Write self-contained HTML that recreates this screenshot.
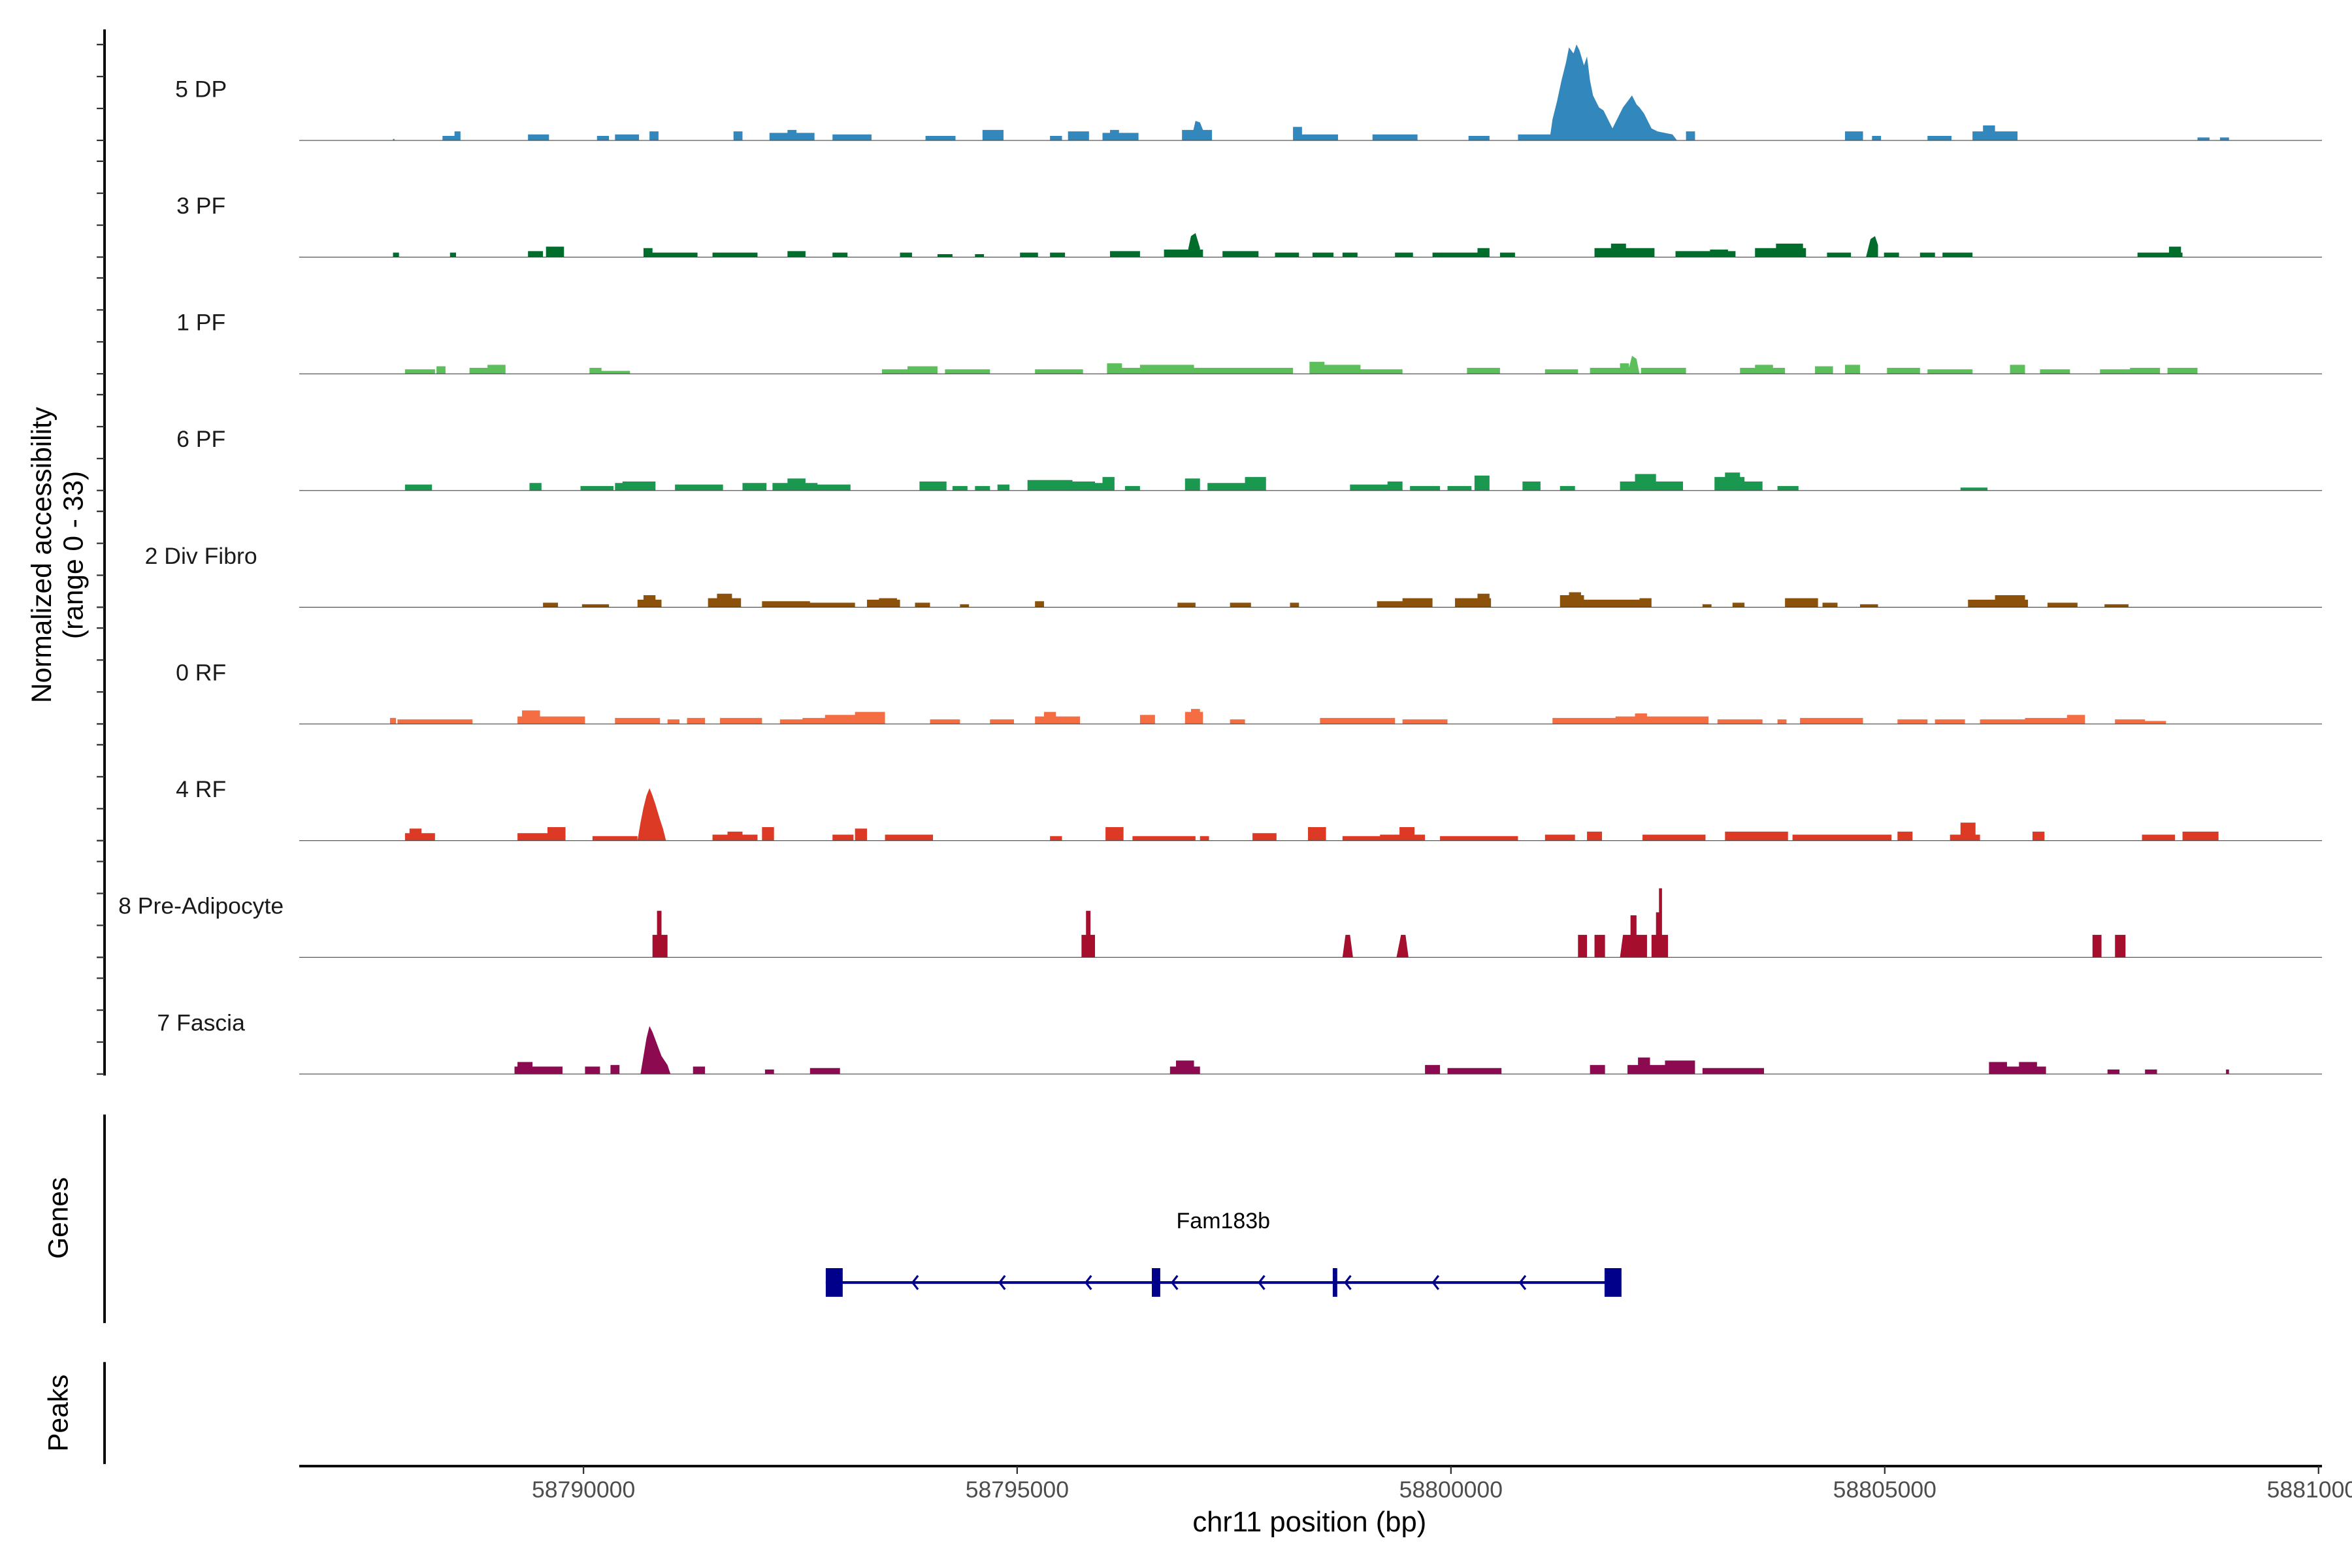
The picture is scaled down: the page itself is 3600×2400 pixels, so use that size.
<!DOCTYPE html>
<html><head><meta charset="utf-8"><style>
html,body{margin:0;padding:0;background:#fff;}
svg{display:block;}
text{font-family:"Liberation Sans",Arial,sans-serif;}
</style></head><body>
<svg width="3600" height="2400" viewBox="0 0 1568 1045.3" preserveAspectRatio="none" xmlns="http://www.w3.org/2000/svg">
<rect width="1568" height="1046" fill="#fff"/>
<line x1="69.7" y1="19.6" x2="69.7" y2="717" stroke="#000" stroke-width="1.7"/>
<g stroke="#333" stroke-width="1">
<path d="M64.5 93.6h5.2M64.5 72.3h5.2M64.5 51h5.2M64.5 29.7h5.2
M64.5 171.4h5.2M64.5 150.1h5.2M64.5 128.8h5.2M64.5 107.5h5.2
M64.5 249.2h5.2M64.5 227.9h5.2M64.5 206.6h5.2M64.5 185.3h5.2
M64.5 327h5.2M64.5 305.7h5.2M64.5 284.4h5.2M64.5 263.1h5.2
M64.5 404.8h5.2M64.5 383.5h5.2M64.5 362.2h5.2M64.5 340.9h5.2
M64.5 482.6h5.2M64.5 461.3h5.2M64.5 440h5.2M64.5 418.7h5.2
M64.5 560.4h5.2M64.5 539.1h5.2M64.5 517.8h5.2M64.5 496.5h5.2
M64.5 638.2h5.2M64.5 616.9h5.2M64.5 595.6h5.2M64.5 574.3h5.2
M64.5 716h5.2M64.5 694.7h5.2M64.5 673.4h5.2M64.5 652.1h5.2"/>
</g>
<text transform="translate(34,370) rotate(-90)" text-anchor="middle" font-size="18.5" fill="#000">Normalized accessibility</text>
<text transform="translate(55,370) rotate(-90)" text-anchor="middle" font-size="18.5" fill="#000">(range 0 - 33)</text>

<g font-size="15.5" fill="#1a1a1a" text-anchor="middle">
<text x="134" y="64.6">5 DP</text>
<text x="134" y="142.4">3 PF</text>
<text x="134" y="220.2">1 PF</text>
<text x="134" y="298">6 PF</text>
<text x="134" y="375.8">2 Div Fibro</text>
<text x="134" y="453.6">0 RF</text>
<text x="134" y="531.4">4 RF</text>
<text x="134" y="609.2">8 Pre-Adipocyte</text>
<text x="134" y="687">7 Fascia</text>
</g>

<g transform="translate(0,93.6)">
<path fill="#3288bd" d="M262 0v-1h1v1zM295 0v-3h12v3zM303 0v-6h4v6zM352 0v-4h14v4zM398 0v-3h8v3zM410 0v-4h16v4zM433 0v-6h6v6zM489 0v-6h6v6zM513 0v-5h30v5zM525 0v-7h6v7zM555 0v-4h26v4zM617 0v-3h20v3zM655 0v-7h14v7zM700 0v-3h8v3zM712 0v-6h14v6zM735 0v-5h24v5zM740 0v-7h6v7zM788 0v-7h20v7zM794 0l3-13l3 1l2 5l3 7zM862 0v-9h6v9zM868 0v-4h24v4zM915 0v-4h30v4zM979 0v-3h14v3zM1012 0v-4h22v4z
M1033 0L1035-14L1038-26L1041-40L1044-52L1046-62L1049-58L1051-64L1053-60L1056-50L1058-56L1060-40L1062-30L1064-26L1066-22L1069-20L1071-16L1073-12L1075-8L1079-16L1082-22L1085-26L1088-30L1091-24L1093-22L1096-18L1099-12L1101-8L1105-6L1115-4L1118 0z
M1124 0v-6h6v6zM1230 0v-6h12v6zM1248 0v-3h6v3zM1285 0v-3h16v3zM1315 0v-6h30v6zM1322 0v-10h8v10zM1465 0v-2h8v2zM1480 0v-2h6v2z"/>
</g>
<g transform="translate(0,171.4)">
<path fill="#006d2c" d="M262 0v-3h4v3zM300 0v-3h4v3zM352 0v-4h10v4zM364 0v-7h12v7zM429 0v-6h6v6zM435 0v-3h30v3zM475 0v-3h30v3zM525 0v-4h12v4zM555 0v-3h10v3zM600 0v-3h8v3zM625 0v-2h10v2zM650 0v-2h6v2zM680 0v-3h12v3zM700 0v-3h10v3zM740 0v-4h20v4zM776 0v-5h26v5zM791 0l3-14l3-2l3 10v6zM815 0v-4h24v4zM850 0v-3h16v3zM875 0v-3h14v3zM895 0v-3h10v3zM930 0v-3h12v3zM955 0v-3h30v3zM985 0v-6h8v6zM1000 0v-3h10v3zM1063 0v-6h40v6zM1074 0v-9h10v9zM1117 0v-4h40v4zM1140 0v-5h12v5zM1170 0v-6h34v6zM1184 0v-9h18v9zM1218 0v-3h16v3zM1244 0l3-12l3-2l2 6v8zM1256 0v-3h10v3zM1280 0v-3h10v3zM1295 0v-3h20v3zM1425 0v-3h30v3zM1446 0v-7h8v7z"/>
</g>
<g transform="translate(0,249.2)">
<path fill="#5dbf5b" d="M270 0v-3h20v3zM291 0v-5h6v5zM313 0v-4h12v4zM325 0v-6h12v6zM393 0v-4h8v4zM400 0v-2h20v2zM588 0v-3h20v3zM605 0v-5h20v5zM630 0v-3h30v3zM690 0v-3h32v3zM738 0v-7h10v7zM748 0v-4h32v4zM760 0v-6h36v6zM790 0v-4h30v4zM820 0v-4h42v4zM873 0v-8h10v8zM883 0v-6h24v6zM905 0v-3h30v3zM978 0v-4h22v4zM1030 0v-3h22v3zM1060 0v-4h20v4zM1080 0v-7h6v7zM1085 0l3-12l3 2l2 10zM1094 0v-4h30v4zM1160 0v-4h30v4zM1170 0v-6h12v6zM1210 0v-5h12v5zM1230 0v-6h10v6zM1258 0v-4h22v4zM1285 0v-3h30v3zM1340 0v-6h10v6zM1360 0v-3h20v3zM1400 0v-3h20v3zM1420 0v-4h20v4zM1445 0v-4h20v4z"/>
</g>
<g transform="translate(0,327)">
<path fill="#1a9850" d="M270 0v-4h18v4zM353 0v-5h8v5zM387 0v-3h22v3zM410 0v-5h8v5zM415 0v-6h22v6zM450 0v-4h32v4zM495 0v-5h16v5zM515 0v-5h30v5zM525 0v-8h12v8zM545 0v-4h22v4zM613 0v-6h18v6zM635 0v-3h10v3zM650 0v-3h10v3zM665 0v-4h8v4zM685 0v-7h30v7zM700 0v-6h30v6zM720 0v-5h20v5zM735 0v-9h8v9zM750 0v-3h10v3zM790 0v-8h10v8zM805 0v-5h30v5zM830 0v-9h14v9zM900 0v-4h32v4zM925 0v-6h10v6zM940 0v-3h20v3zM965 0v-3h16v3zM983 0v-10h10v10zM1015 0v-6h12v6zM1040 0v-3h10v3zM1080 0v-6h42v6zM1090 0v-11h14v11zM1143 0v-9h20v9zM1150 0v-12h10v12zM1163 0v-6h12v6zM1185 0v-3h14v3zM1307 0v-2h18v2z"/>
</g>
<g transform="translate(0,404.8)">
<path fill="#8c510a" d="M362 0v-3h10v3zM388 0v-2h18v2zM425 0v-5h16v5zM429 0v-8h8v8zM472 0v-6h22v6zM478 0v-9h10v9zM508 0v-4h32v4zM540 0v-3h20v3zM560 0v-3h10v3zM578 0v-5h22v5zM586 0v-6h12v6zM610 0v-3h10v3zM640 0v-2h6v2zM690 0v-4h6v4zM785 0v-3h12v3zM820 0v-3h14v3zM860 0v-3h6v3zM918 0v-4h20v4zM935 0v-6h20v6zM970 0v-6h24v6zM985 0v-9h8v9zM1040 0v-8h16v8zM1046 0v-10h8v10zM1056 0v-5h44v5zM1093 0v-6h8v6zM1135 0v-2h6v2zM1155 0v-3h8v3zM1190 0v-6h22v6zM1215 0v-3h10v3zM1240 0v-2h12v2zM1312 0v-5h40v5zM1330 0v-8h20v8zM1365 0v-3h20v3zM1403 0v-2h16v2z"/>
</g>
<g transform="translate(0,482.6)">
<path fill="#f46d43" d="M260 0v-4h4v4zM265 0v-3h50v3zM345 0v-5h6v5zM348 0v-9h12v9zM360 0v-5h30v5zM410 0v-4h30v4zM445 0v-3h8v3zM458 0v-4h12v4zM480 0v-4h28v4zM520 0v-3h16v3zM535 0v-4h30v4zM550 0v-6h26v6zM570 0v-8h20v8zM620 0v-3h20v3zM660 0v-3h16v3zM690 0v-5h30v5zM696 0v-8h8v8zM760 0v-6h10v6zM790 0v-8h12v8zM794 0v-10h6v10zM820 0v-3h10v3zM880 0v-4h20v4zM890 0v-4h40v4zM935 0v-3h30v3zM1035 0v-4h42v4zM1077 0v-5h50v5zM1090 0v-7h8v7zM1125 0v-5h14v5zM1145 0v-3h30v3zM1185 0v-3h6v3zM1200 0v-4h42v4zM1265 0v-3h20v3zM1290 0v-3h20v3zM1320 0v-3h30v3zM1350 0v-4h30v4zM1378 0v-6h12v6zM1410 0v-3h20v3zM1430 0v-2h14v2z"/>
</g>
<g transform="translate(0,560.4)">
<path fill="#dc3a24" d="M270 0v-5h20v5zM273 0v-8h8v8zM345 0v-5h20v5zM365 0v-9h12v9zM395 0v-3h10v3zM405 0v-3h20v3zM425 0L427-12L429-22L431-30L433-35L435-30L437-24L440-14L442-8L444 0zM475 0v-4h30v4zM485 0v-6h10v6zM508 0v-9h8v9zM555 0v-4h14v4zM570 0v-8h8v8zM590 0v-4h32v4zM700 0v-3h8v3zM737 0v-9h12v9zM755 0v-3h42v3zM800 0v-3h6v3zM835 0v-5h16v5zM872 0v-9h12v9zM895 0v-3h30v3zM920 0v-4h30v4zM933 0v-9h10v9zM960 0v-3h52v3zM1030 0v-4h20v4zM1058 0v-6h10v6zM1095 0v-4h42v4zM1150 0v-6h42v6zM1195 0v-4h66v4zM1265 0v-6h10v6zM1300 0v-4h20v4zM1307 0v-12h10v12zM1355 0v-6h8v6zM1428 0v-4h22v4zM1455 0v-6h24v6z"/>
</g>
<g transform="translate(0,638.2)">
<path fill="#a50f2d" d="M435 0v-15h10v15zM438 0v-31h3v31zM721 0v-15h9v15zM724 0v-31h3v31zM895 0l2-15h3l2 15zM931 0l3-15h3l2 15zM1052 0v-15h6v15zM1063 0v-15h7v15zM1080 0l2-15h16v15zM1087 0v-28h4v28zM1101 0v-15h11v15zM1104 0v-30h4v30zM1106 0v-46h2v46zM1395 0v-15h6v15zM1410 0v-15h7v15z"/>
</g>
<g transform="translate(0,716)">
<path fill="#8b0a50" d="M343 0v-5h32v5zM345 0v-8h10v8zM390 0v-5h10v5zM407 0v-6h6v6zM427 0L429-12L431-24L433-32L435-28L438-20L441-12L445-6L447 0zM462 0v-5h8v5zM510 0v-3h6v3zM540 0v-4h20v4zM780 0v-5h20v5zM784 0v-9h12v9zM950 0v-6h10v6zM965 0v-4h36v4zM1060 0v-6h10v6zM1085 0v-6h42v6zM1092 0v-11h8v11zM1110 0v-9h20v9zM1135 0v-4h40v4zM1170 0v-4h6v4zM1326 0v-8h12v8zM1338 0v-5h26v5zM1346 0v-8h12v8zM1405 0v-3h8v3zM1430 0v-3h8v3zM1484 0v-3h2v3z"/>
</g>

<g stroke="#444" stroke-width="0.5">
<path d="M199.5 93.6H1548M199.5 171.4H1548M199.5 249.2H1548M199.5 327H1548M199.5 404.8H1548M199.5 482.6H1548M199.5 560.4H1548M199.5 638.2H1548M199.5 716H1548"/>
</g>

<line x1="69.7" y1="743" x2="69.7" y2="882" stroke="#000" stroke-width="1.7"/>
<text transform="translate(45,812) rotate(-90)" text-anchor="middle" font-size="18.5" fill="#000">Genes</text>
<text x="815.5" y="818.8" text-anchor="middle" font-size="14.8" fill="#000">Fam183b</text>
<g fill="#00008b" stroke="none">
<rect x="550.5" y="854.1" width="530" height="1.8"/>
<rect x="550.5" y="845.4" width="11.3" height="19.1"/>
<rect x="767.9" y="845.4" width="5.6" height="19.1"/>
<rect x="888.5" y="845.4" width="3" height="19.1"/>
<rect x="1069.7" y="845.4" width="11.3" height="19.1"/>
</g>
<g fill="none" stroke="#00008b" stroke-width="1.4">
<path d="M612 850.4l-3.6 4.6l3.6 4.6M670 850.4l-3.6 4.6l3.6 4.6M727.5 850.4l-3.6 4.6l3.6 4.6M785 850.4l-3.6 4.6l3.6 4.6M843 850.4l-3.6 4.6l3.6 4.6M900.5 850.4l-3.6 4.6l3.6 4.6M959 850.4l-3.6 4.6l3.6 4.6M1017 850.4l-3.6 4.6l3.6 4.6"/>
</g>

<line x1="69.7" y1="908" x2="69.7" y2="976" stroke="#000" stroke-width="1.7"/>
<text transform="translate(45,942) rotate(-90)" text-anchor="middle" font-size="18.5" fill="#000">Peaks</text>

<line x1="199.5" y1="977.4" x2="1548" y2="977.4" stroke="#000" stroke-width="1.7"/>
<g stroke="#333" stroke-width="1">
<path d="M389 977.4v5.2M678.1 977.4v5.2M967.3 977.4v5.2M1256.5 977.4v5.2M1545.7 977.4v5.2"/>
</g>
<g font-size="15.5" fill="#4d4d4d" text-anchor="middle">
<text x="389" y="998.3">58790000</text>
<text x="678.1" y="998.3">58795000</text>
<text x="967.3" y="998.3">58800000</text>
<text x="1256.5" y="998.3">58805000</text>
<text x="1545.7" y="998.3">58810000</text>
</g>
<text x="873" y="1021" text-anchor="middle" font-size="19" fill="#000">chr11 position (bp)</text>
</svg>
</body></html>
